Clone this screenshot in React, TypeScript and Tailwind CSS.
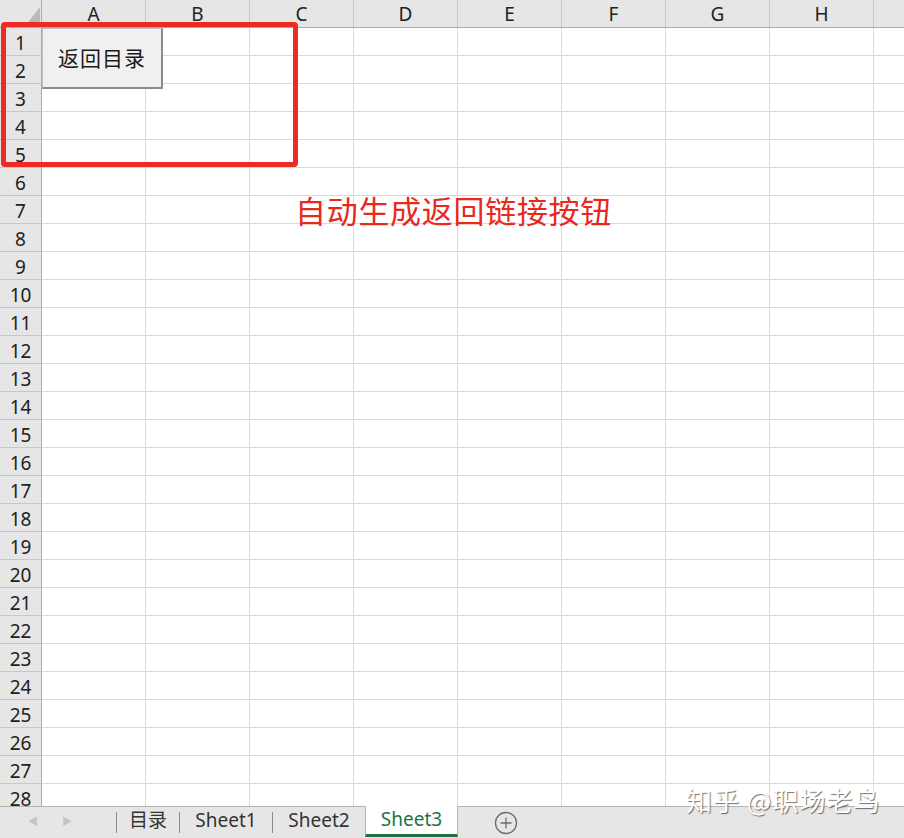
import React from "react";

const cols = ["A", "B", "C", "D", "E", "F", "G", "H", ""];
const rows = Array.from({ length: 28 }, (_, i) => i + 1);

const tabs = [
  { name: "目录", w: "w-[62px]" },
  { name: "Sheet1", w: "w-[92px]" },
  { name: "Sheet2", w: "w-[92px]" },
];

const App = () => {
  return (
    <div className="relative w-[904px] h-[838px] overflow-hidden bg-white text-[#222] font-['Noto_Sans','Noto_Sans_CJK_SC',sans-serif]">
      {/* grid */}
      <div className="h-[806px] overflow-hidden">
        <div className="flex h-[28px] bg-[#e6e6e6] border-b border-[#ababab]">
          <div className="relative w-[42px] shrink-0 border-r border-[#ababab]">
            <svg className="absolute left-[26px] top-[7px]" width="14" height="18" viewBox="0 0 14 18">
              <polygon points="14,0 14,18 0,18" fill="#b9b9b9" />
            </svg>
          </div>
          {cols.map((c, i) => (
            <div
              key={i}
              className="w-[104px] shrink-0 border-r border-[#c8c8c8] flex items-center justify-center text-[19px] leading-none pt-[2px]"
            >
              {c}
            </div>
          ))}
        </div>
        {rows.map((r) => (
          <div key={r} className="flex h-[28px]">
            <div className="w-[42px] shrink-0 bg-[#e6e6e6] border-r border-[#ababab] border-b border-b-[#c8c8c8] flex items-center justify-center text-[19px] leading-none pt-[3px]">
              {r}
            </div>
            {cols.map((c, i) => (
              <div key={i} className="w-[104px] shrink-0 border-r border-b border-[#d9d9d9]" />
            ))}
          </div>
        ))}
      </div>

      {/* sheet tabs */}
      <div className="flex h-[32px] bg-[#e6e6e6] border-t border-[#b4b4b4]">
        <div className="w-[116px] shrink-0 flex items-center text-[#c4c4c4] text-[10px] pb-[2px]">
          <span className="ml-[28px]">◀</span>
          <span className="ml-[24px]">▶</span>
        </div>
        {tabs.map((t) => (
          <div key={t.name} className="flex items-center">
            <div className="w-px h-[21px] bg-[#8a8a8a]" />
            <div className={`${t.w} flex items-center justify-center text-[19px] text-[#333] pb-[4px]`}>{t.name}</div>
          </div>
        ))}
        <div className="w-[93px] -mt-px h-[31px] bg-white border-x border-[#b4b4b4] border-b-[3px] border-b-[#217346] flex items-center justify-center text-[19px] text-[#217346] pb-[2px]">
          Sheet3
        </div>
        <div className="ml-[36px] flex items-center">
          <svg width="24" height="24" viewBox="0 0 24 24">
            <circle cx="12" cy="12" r="10.5" fill="none" stroke="#6d6d6d" strokeWidth="1.3" />
            <path d="M12 6.5v11M6.5 12h11" stroke="#6d6d6d" strokeWidth="1.3" />
          </svg>
        </div>
      </div>

      {/* shape button */}
      <div className="absolute left-[42px] top-[28px] w-[121px] h-[61px] bg-[#f0f0f0] border border-[#c0c0c0] border-r-2 border-b-2 border-r-[#8c8c8c] border-b-[#8c8c8c] flex items-center justify-center text-[21px] tracking-[1px] text-[#1a1a1a] font-['Noto_Sans_CJK_SC',sans-serif]">
        返回目录
      </div>

      {/* annotations */}
      <div className="absolute left-[1px] top-[22px] w-[297px] h-[145px] border-[5px] border-[#ee2a24] rounded-[4px]" />
      <div className="absolute left-[295px] top-[188px] text-[31px] leading-[44px] tracking-[0.7px] text-[#e8291c] font-['Noto_Sans_CJK_SC',sans-serif]">
        自动生成返回链接按钮
      </div>
      <div className="absolute left-[686px] top-[783px] text-[26px] leading-[34px] text-white tracking-[1px] font-['Noto_Sans_CJK_SC',sans-serif] [text-shadow:1px_1px_1px_rgba(0,0,0,0.55)]">
        知乎 @职场老鸟
      </div>
    </div>
  );
};

export default App;
